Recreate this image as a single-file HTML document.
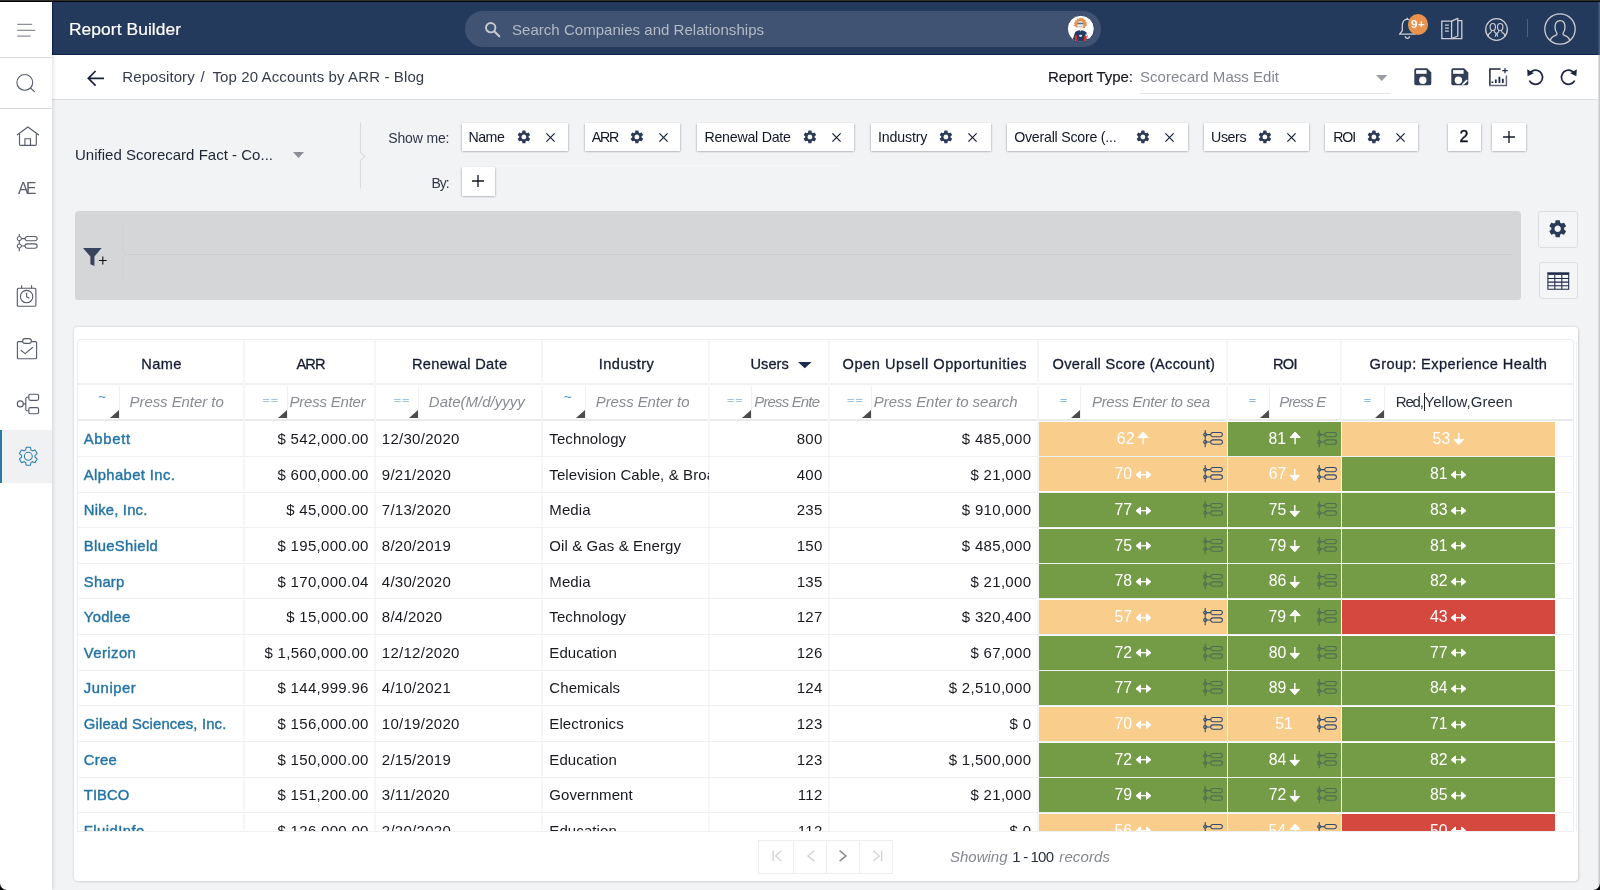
<!DOCTYPE html>
<html lang="en"><head><meta charset="utf-8"><title>Report Builder</title>
<style>

html,body{margin:0;padding:0}
body{will-change:transform;width:1600px;height:890px;overflow:hidden;position:relative;background:#f2f3f5;font-family:'Liberation Sans',sans-serif;}
.t{position:absolute;white-space:pre;line-height:20px;height:20px}
.a{position:absolute}
svg{position:absolute;overflow:visible}
.chip{position:absolute;background:#fff;top:122.5px;height:28.5px;box-shadow:0 1.3px 2.2px rgba(10,15,30,.4),0 0 1px rgba(20,30,50,.12);}
.hl{position:absolute;height:1px;background:#eef0f2}
.vl{position:absolute;width:1px;background:#f0f1f3}

</style></head>
<body>
<svg width="0" height="0" style="left:0;top:0"><defs>
<path id="gear" d="M19.14 12.94c.04-.3.06-.61.06-.94 0-.32-.02-.64-.07-.94l2.03-1.58c.18-.14.23-.41.12-.61l-1.92-3.32c-.12-.22-.37-.29-.59-.22l-2.39.96c-.5-.38-1.03-.7-1.62-.94l-.36-2.54c-.04-.24-.24-.41-.48-.41h-3.84c-.24 0-.43.17-.47.41l-.36 2.54c-.59.24-1.13.57-1.62.94l-2.39-.96c-.22-.08-.47 0-.59.22L2.74 8.87c-.12.21-.08.47.12.61l2.03 1.58c-.05.3-.09.63-.09.94s.02.64.07.94l-2.03 1.58c-.18.14-.23.41-.12.61l1.92 3.32c.12.22.37.29.59.22l2.39-.96c.5.38 1.03.7 1.62.94l.36 2.54c.05.24.24.41.48.41h3.84c.24 0 .44-.17.47-.41l.36-2.54c.59-.24 1.13-.56 1.62-.94l2.39.96c.22.08.47 0 .59-.22l1.92-3.32c.12-.22.07-.47-.12-.61l-2.01-1.58zM12 15.6c-1.98 0-3.6-1.62-3.6-3.6s1.62-3.6 3.6-3.6 3.6 1.62 3.6 3.6-1.62 3.6-3.6 3.6z"/>
<g id="tl" fill="none"><path d="M2.2 0V17.2"/><circle cx="2.2" cy="4.6" r="1.55"/><circle cx="2.2" cy="12" r="1.55"/><path d="M3.75 4.6H7.7M3.75 12H7.7"/><rect x="7.7" y="2.45" width="11.7" height="4.3" rx="2.15"/><rect x="7.7" y="9.85" width="11.7" height="4.3" rx="2.15"/></g>
<g id="up"><path d="M5.1 0L10.2 5.6H0Z"/><path d="M5.1 4V12.2" stroke-width="1.4" fill="none"/></g>
<g id="dn"><path d="M4.8 11.8L9.6 6.4H0Z"/><path d="M4.8 0V8" stroke-width="1.4" fill="none"/></g>
<g id="lr"><path d="M0 3.7L4.5 0V7.4Z"/><path d="M15 3.7L10.5 0V7.4Z"/><path d="M3.5 3.7H11.5" stroke-width="1.25" fill="none"/></g>
<path id="tri" d="M9 0V8H0Z"/>
</defs></svg>
<span class="t" style="left:75.00px;top:144.90px;font-size:15px;color:#1e2533;letter-spacing:0.015px;">Unified Scorecard Fact - Co...</span>
<svg style="left:293px;top:152.2px;" width="12" height="7" viewBox="0 0 12 7"><path d="M0 0H11L5.5 6Z" fill="#8c9096"/></svg>
<svg style="left:358px;top:122px;" width="10" height="68" viewBox="0 0 10 68"><path d="M2.5 .5V30.6L6.8 34.4L2.5 38.2V66.5" fill="none" stroke="#dadbde" stroke-width="1.1"/></svg>
<span class="t" style="left:388.30px;top:128.40px;font-size:14px;color:#2f3746;letter-spacing:-0.150px;">Show me:</span>
<span class="t" style="left:431.40px;top:173.40px;font-size:14px;color:#2f3746;letter-spacing:-1.017px;">By:</span>
<div class="chip" style="left:461.5px;width:106.5px"></div>
<span class="t" style="left:468.40px;top:126.70px;font-size:14.2px;color:#121826;letter-spacing:-0.453px;">Name</span>
<svg style="left:515.9px;top:128.8px;" width="15.8" height="15.8" viewBox="0 0 24 24"><use href="#gear" fill="#2b3a57"/></svg>
<svg style="left:545.6px;top:133.2px;" width="9" height="9" viewBox="0 0 9 9"><path d="M.4 .4L8.6 8.6M8.6 .4L.4 8.6" stroke="#19233c" stroke-width="1.25"/></svg>
<div class="chip" style="left:584.5px;width:95.79999999999995px"></div>
<span class="t" style="left:591.70px;top:126.70px;font-size:14.2px;color:#121826;letter-spacing:-1.200px;">ARR</span>
<svg style="left:628.5px;top:128.8px;" width="15.8" height="15.8" viewBox="0 0 24 24"><use href="#gear" fill="#2b3a57"/></svg>
<svg style="left:658.5px;top:133.2px;" width="9" height="9" viewBox="0 0 9 9"><path d="M.4 .4L8.6 8.6M8.6 .4L.4 8.6" stroke="#19233c" stroke-width="1.25"/></svg>
<div class="chip" style="left:697px;width:157px"></div>
<span class="t" style="left:704.40px;top:126.70px;font-size:14.2px;color:#121826;letter-spacing:-0.230px;">Renewal Date</span>
<svg style="left:801.8px;top:128.8px;" width="15.8" height="15.8" viewBox="0 0 24 24"><use href="#gear" fill="#2b3a57"/></svg>
<svg style="left:832.2px;top:133.2px;" width="9" height="9" viewBox="0 0 9 9"><path d="M.4 .4L8.6 8.6M8.6 .4L.4 8.6" stroke="#19233c" stroke-width="1.25"/></svg>
<div class="chip" style="left:870.5px;width:120.5px"></div>
<span class="t" style="left:878.10px;top:126.70px;font-size:14.2px;color:#121826;letter-spacing:-0.167px;">Industry</span>
<svg style="left:937.9px;top:128.8px;" width="15.8" height="15.8" viewBox="0 0 24 24"><use href="#gear" fill="#2b3a57"/></svg>
<svg style="left:968px;top:133.2px;" width="9" height="9" viewBox="0 0 9 9"><path d="M.4 .4L8.6 8.6M8.6 .4L.4 8.6" stroke="#19233c" stroke-width="1.25"/></svg>
<div class="chip" style="left:1007px;width:180.5999999999999px"></div>
<span class="t" style="left:1014.20px;top:126.70px;font-size:14.2px;color:#121826;letter-spacing:-0.238px;">Overall Score (...</span>
<svg style="left:1134.5px;top:128.8px;" width="15.8" height="15.8" viewBox="0 0 24 24"><use href="#gear" fill="#2b3a57"/></svg>
<svg style="left:1164.8px;top:133.2px;" width="9" height="9" viewBox="0 0 9 9"><path d="M.4 .4L8.6 8.6M8.6 .4L.4 8.6" stroke="#19233c" stroke-width="1.25"/></svg>
<div class="chip" style="left:1204px;width:105px"></div>
<span class="t" style="left:1211.10px;top:126.70px;font-size:14.2px;color:#121826;letter-spacing:-0.416px;">Users</span>
<svg style="left:1256.5px;top:128.8px;" width="15.8" height="15.8" viewBox="0 0 24 24"><use href="#gear" fill="#2b3a57"/></svg>
<svg style="left:1286.8px;top:133.2px;" width="9" height="9" viewBox="0 0 9 9"><path d="M.4 .4L8.6 8.6M8.6 .4L.4 8.6" stroke="#19233c" stroke-width="1.25"/></svg>
<div class="chip" style="left:1325.2px;width:92.79999999999995px"></div>
<span class="t" style="left:1333.30px;top:126.70px;font-size:14.2px;color:#121826;letter-spacing:-1.200px;">ROI</span>
<svg style="left:1365.9px;top:128.8px;" width="15.8" height="15.8" viewBox="0 0 24 24"><use href="#gear" fill="#2b3a57"/></svg>
<svg style="left:1396px;top:133.2px;" width="9" height="9" viewBox="0 0 9 9"><path d="M.4 .4L8.6 8.6M8.6 .4L.4 8.6" stroke="#19233c" stroke-width="1.25"/></svg>
<div class="chip" style="left:1447.5px;width:33.6px"></div>
<span class="t" style="left:1459.55px;top:126.60px;font-size:16px;color:#10151f;-webkit-text-stroke:0.45px #10151f;">2</span>
<div class="chip" style="left:1491.8px;width:34px"></div>
<svg style="left:1503px;top:130.8px;" width="12" height="12" viewBox="0 0 12 12"><path d="M6 0V12M0 6H12" stroke="#121826" stroke-width="1.35"/></svg>
<div class="chip" style="left:461.5px;width:33.4px;top:167.2px"></div>
<svg style="left:472px;top:175.2px;" width="12" height="12" viewBox="0 0 12 12"><path d="M6 0V12M0 6H12" stroke="#121826" stroke-width="1.35"/></svg>
<div class="a" style="left:461.5px;top:165.4px;width:378px;height:1px;background:#f6f7f8"></div>
<div class="a" style="left:75px;top:211px;width:1446px;height:89px;background:#d5d6d8;border-radius:3.5px"></div>
<svg style="left:83.4px;top:247.8px;" width="25" height="19" viewBox="0 0 25 19"><path d="M0 0H18.6L11.4 8.6V18L7.4 16.2V8.6Z" fill="#36445c"/><path d="M19.8 8.6V16.4M15.9 12.5H23.7" stroke="#111" stroke-width="1.1"/></svg>
<svg style="left:121px;top:220px;" width="10" height="68" viewBox="0 0 10 68"><path d="M1.7 0V31.2L5.4 34L1.7 36.8V66" fill="none" stroke="#cdced0" stroke-width="1" stroke-dasharray="1.2 1.2"/></svg>
<div class="a" style="left:129px;top:253.5px;width:1383.5px;height:1px;background:#cbccce"></div>
<div class="a" style="left:1538px;top:211.4px;width:39.6px;height:36.6px;border:1px solid #dcdde0;border-radius:3px;box-sizing:border-box;background:#f4f5f6"></div>
<svg style="left:1547.2px;top:218.4px;" width="21.4" height="21.4" viewBox="0 0 24 24"><use href="#gear" fill="#2b3a57"/></svg>
<div class="a" style="left:1539px;top:261.6px;width:38.6px;height:37.2px;border:1px solid #dcdde0;border-radius:3px;box-sizing:border-box;background:#f4f5f6"></div>
<svg style="left:1547px;top:271.5px;" width="23" height="18" viewBox="0 0 23 18"><rect x=".3" y=".3" width="22" height="2.6" fill="#1d2a4a"/><path d="M.9 2.9V17.3H21.7V2.9M.9 6.5H21.7M.9 10.1H21.7M.9 13.7H21.7M7.8 2.9V17.3M14.8 2.9V17.3" fill="none" stroke="#1d2a4a" stroke-width="1.05"/></svg>
<div class="a" style="left:74px;top:327px;width:1504px;height:554px;background:#fff;border-radius:4px;box-shadow:0 0 3px rgba(0,0,0,.16),1px 1px 3px rgba(0,0,0,.08)"></div>
<div class="a" style="left:77px;top:339px;width:1497px;height:492.5px;border:1px solid #ecedef;border-bottom:none;border-radius:4px 4px 0 0;box-sizing:border-box"></div>
<div class="a" style="left:78px;top:383px;width:1495.5px;height:2px;background:#eeeff0"></div>
<div class="a" style="left:78px;top:419px;width:1495.5px;height:1.6px;background:#e9eaeb"></div>
<div class="vl" style="left:243.4px;top:340px;height:491px;width:2px;background:#f5f6f8"></div>
<div class="vl" style="left:374.4px;top:340px;height:491px;width:2px;background:#f5f6f8"></div>
<div class="vl" style="left:541.4px;top:340px;height:491px;width:2px;background:#f5f6f8"></div>
<div class="vl" style="left:707.9px;top:340px;height:491px;width:2px;background:#f5f6f8"></div>
<div class="vl" style="left:827.9px;top:340px;height:491px;width:2px;background:#f5f6f8"></div>
<div class="vl" style="left:1037.2px;top:340px;height:491px;width:2px;background:#f5f6f8"></div>
<div class="vl" style="left:1226.0px;top:340px;height:491px;width:2px;background:#f5f6f8"></div>
<div class="vl" style="left:1340.4px;top:340px;height:491px;width:2px;background:#f5f6f8"></div>
<div class="vl" style="left:1575.5px;top:342px;height:489px;background:#f1f2f3"></div>
<span class="t" style="left:141.30px;top:354.20px;font-size:14.6px;color:#141d33;letter-spacing:0.354px;-webkit-text-stroke:0.3px #141d33;">Name</span>
<span class="t" style="left:296.50px;top:354.20px;font-size:14.6px;color:#141d33;letter-spacing:-0.906px;-webkit-text-stroke:0.3px #141d33;">ARR</span>
<span class="t" style="left:412.00px;top:354.20px;font-size:14.6px;color:#141d33;letter-spacing:0.303px;-webkit-text-stroke:0.3px #141d33;">Renewal Date</span>
<span class="t" style="left:598.80px;top:354.20px;font-size:14.6px;color:#141d33;letter-spacing:0.440px;-webkit-text-stroke:0.3px #141d33;">Industry</span>
<span class="t" style="left:750.50px;top:354.20px;font-size:14.6px;color:#141d33;letter-spacing:0.048px;-webkit-text-stroke:0.3px #141d33;">Users</span>
<span class="t" style="left:842.50px;top:354.20px;font-size:14.6px;color:#141d33;letter-spacing:0.535px;-webkit-text-stroke:0.3px #141d33;">Open Upsell Opportunities</span>
<span class="t" style="left:1052.50px;top:354.20px;font-size:14.6px;color:#141d33;letter-spacing:0.344px;-webkit-text-stroke:0.3px #141d33;">Overall Score (Account)</span>
<span class="t" style="left:1273.00px;top:354.20px;font-size:14.6px;color:#141d33;letter-spacing:-0.727px;-webkit-text-stroke:0.3px #141d33;">ROI</span>
<span class="t" style="left:1369.50px;top:354.20px;font-size:14.6px;color:#141d33;letter-spacing:0.416px;-webkit-text-stroke:0.3px #141d33;">Group: Experience Health</span>
<svg style="left:798.2px;top:362px;" width="14" height="7" viewBox="0 0 14 7"><path d="M0 0H13.6L6.8 6.2Z" fill="#1d2a4a"/></svg>
<div class="vl" style="left:119.1px;top:386px;height:32px;background:#eff0f1"></div>
<svg style="left:110.1px;top:410.3px;" width="9" height="8" viewBox="0 0 9 8"><use href="#tri" fill="#4c4c4e"/></svg>
<span class="t" style="left:98.30px;top:386.90px;font-size:13.6px;color:#3f8ac2;">~</span>
<span class="t" style="left:129.50px;top:392.00px;font-size:15px;color:#888b91;font-style:italic;letter-spacing:-0.061px;">Press Enter to</span>
<div class="vl" style="left:286.6px;top:386px;height:32px;background:#eff0f1"></div>
<svg style="left:277.6px;top:410.3px;" width="9" height="8" viewBox="0 0 9 8"><use href="#tri" fill="#4c4c4e"/></svg>
<span class="t" style="left:262.50px;top:390.50px;font-size:12.5px;color:#9dc3e3;font-weight:700;letter-spacing:0.891px;transform:scaleY(.66);">==</span>
<span class="t" style="left:289.50px;top:392.00px;font-size:15px;color:#888b91;font-style:italic;letter-spacing:-0.212px;">Press Enter</span>
<div class="vl" style="left:417.6px;top:386px;height:32px;background:#eff0f1"></div>
<svg style="left:408.6px;top:410.3px;" width="9" height="8" viewBox="0 0 9 8"><use href="#tri" fill="#4c4c4e"/></svg>
<span class="t" style="left:393.80px;top:390.50px;font-size:12.5px;color:#9dc3e3;font-weight:700;letter-spacing:0.891px;transform:scaleY(.66);">==</span>
<span class="t" style="left:428.80px;top:392.00px;font-size:15px;color:#888b91;font-style:italic;letter-spacing:0.012px;">Date(M/d/yyyy</span>
<div class="vl" style="left:584.6px;top:386px;height:32px;background:#eff0f1"></div>
<svg style="left:575.6px;top:410.3px;" width="9" height="8" viewBox="0 0 9 8"><use href="#tri" fill="#4c4c4e"/></svg>
<span class="t" style="left:563.80px;top:386.90px;font-size:13.6px;color:#3f8ac2;">~</span>
<span class="t" style="left:595.80px;top:392.00px;font-size:15px;color:#888b91;font-style:italic;letter-spacing:-0.104px;">Press Enter to</span>
<div class="vl" style="left:751.1px;top:386px;height:32px;background:#eff0f1"></div>
<svg style="left:742.1px;top:410.3px;" width="9" height="8" viewBox="0 0 9 8"><use href="#tri" fill="#4c4c4e"/></svg>
<span class="t" style="left:727.00px;top:390.50px;font-size:12.5px;color:#9dc3e3;font-weight:700;letter-spacing:0.891px;transform:scaleY(.66);">==</span>
<span class="t" style="left:754.30px;top:392.00px;font-size:15px;color:#888b91;font-style:italic;letter-spacing:-0.853px;">Press Ente</span>
<div class="vl" style="left:871.1px;top:386px;height:32px;background:#eff0f1"></div>
<svg style="left:862.1px;top:410.3px;" width="9" height="8" viewBox="0 0 9 8"><use href="#tri" fill="#4c4c4e"/></svg>
<span class="t" style="left:847.00px;top:390.50px;font-size:12.5px;color:#9dc3e3;font-weight:700;letter-spacing:1.200px;transform:scaleY(.66);">==</span>
<span class="t" style="left:873.80px;top:392.00px;font-size:15px;color:#888b91;font-style:italic;letter-spacing:-0.027px;">Press Enter to search</span>
<div class="vl" style="left:1080.4px;top:386px;height:32px;background:#eff0f1"></div>
<svg style="left:1071.4px;top:410.3px;" width="9" height="8" viewBox="0 0 9 8"><use href="#tri" fill="#4c4c4e"/></svg>
<span class="t" style="left:1060.00px;top:390.50px;font-size:12.5px;color:#8ebbe0;font-weight:700;transform:scaleY(.66);">=</span>
<span class="t" style="left:1092.00px;top:392.00px;font-size:15px;color:#888b91;font-style:italic;letter-spacing:-0.318px;">Press Enter to sea</span>
<div class="vl" style="left:1269.2px;top:386px;height:32px;background:#eff0f1"></div>
<svg style="left:1260.2px;top:410.3px;" width="9" height="8" viewBox="0 0 9 8"><use href="#tri" fill="#4c4c4e"/></svg>
<span class="t" style="left:1248.80px;top:390.50px;font-size:12.5px;color:#8ebbe0;font-weight:700;transform:scaleY(.66);">=</span>
<span class="t" style="left:1279.30px;top:392.00px;font-size:15px;color:#888b91;font-style:italic;letter-spacing:-0.919px;">Press E</span>
<div class="vl" style="left:1383.6px;top:386px;height:32px;background:#eff0f1"></div>
<svg style="left:1374.6px;top:410.3px;" width="9" height="8" viewBox="0 0 9 8"><use href="#tri" fill="#4c4c4e"/></svg>
<span class="t" style="left:1363.80px;top:390.50px;font-size:12.5px;color:#8ebbe0;font-weight:700;transform:scaleY(.66);">=</span>
<span class="t" style="left:1395.80px;top:392.00px;font-size:15px;color:#262d3b;letter-spacing:-1.200px;">Red,</span>
<span class="t" style="left:1424.60px;top:392.00px;font-size:15px;color:#262d3b;letter-spacing:0.005px;">Yellow,Green</span>
<div class="a" style="left:1424.2px;top:392.5px;width:1px;height:18.5px;background:#222"></div>
<div class="a" style="left:78px;top:420px;width:1496px;height:411.2px;overflow:hidden"><div class="a" style="left:-78px;top:-420px;width:1600px;height:890px">
<span class="t" style="left:83.80px;top:428.92px;font-size:14.8px;color:#2474a5;letter-spacing:0.694px;-webkit-text-stroke:0.4px #2474a5;">Abbett</span>
<span class="t" style="left:277.51px;top:428.92px;font-size:15px;color:#17191e;letter-spacing:0.300px;">$ 542,000.00</span>
<span class="t" style="left:381.80px;top:428.92px;font-size:15px;color:#17191e;letter-spacing:0.280px;">12/30/2020</span>
<span class="t" style="left:549.30px;top:428.92px;font-size:15px;color:#17191e;letter-spacing:0.100px;">Technology</span>
<span class="t" style="left:796.67px;top:428.92px;font-size:15px;color:#17191e;letter-spacing:0.300px;">800</span>
<span class="t" style="left:961.87px;top:428.92px;font-size:15px;color:#17191e;letter-spacing:0.300px;">$ 485,000</span>
<div class="a" style="left:1039.3px;top:421.70px;width:187.9px;height:34.05px;background:#f9cd8c"></div>
<span class="t" style="left:1116.85px;top:428.72px;font-size:15.8px;color:#fff;letter-spacing:0.022px;">62</span>
<svg style="left:1138.05px;top:432.02px;" width="11" height="13" viewBox="0 0 11 13"><use href="#up" fill="#fff" stroke="#fff"/></svg>
<svg style="left:1203.3px;top:429.8px;" width="21" height="18" viewBox="0 0 21 18"><use href="#tl" stroke="#2f4a6e" stroke-width="1.05"/></svg>
<div class="a" style="left:1228.3px;top:421.70px;width:113.0px;height:34.05px;background:#749b46"></div>
<span class="t" style="left:1268.40px;top:428.72px;font-size:15.8px;color:#fff;letter-spacing:0.022px;">81</span>
<svg style="left:1289.6px;top:432.02px;" width="11" height="13" viewBox="0 0 11 13"><use href="#up" fill="#fff" stroke="#fff"/></svg>
<svg style="left:1317.4px;top:429.8px;" width="21" height="18" viewBox="0 0 21 18"><use href="#tl" stroke="#4d6f52" stroke-width="1.05"/></svg>
<div class="a" style="left:1342.1px;top:421.70px;width:213.2px;height:34.05px;background:#f9cd8c"></div>
<span class="t" style="left:1432.60px;top:428.72px;font-size:15.8px;color:#fff;letter-spacing:0.022px;">53</span>
<svg style="left:1453.8px;top:433.32px;" width="10" height="12" viewBox="0 0 10 12"><use href="#dn" fill="#fff" stroke="#fff"/></svg>
<div class="hl" style="left:78px;top:455.85px;width:1495.5px"></div>
<span class="t" style="left:83.80px;top:464.57px;font-size:14.8px;color:#2474a5;letter-spacing:0.384px;-webkit-text-stroke:0.4px #2474a5;">Alphabet Inc.</span>
<span class="t" style="left:277.51px;top:464.57px;font-size:15px;color:#17191e;letter-spacing:0.300px;">$ 600,000.00</span>
<span class="t" style="left:381.80px;top:464.57px;font-size:15px;color:#17191e;letter-spacing:0.280px;">9/21/2020</span>
<div class="a" style="left:543.5px;top:457.05px;width:165.5px;height:34px;overflow:hidden"><div class="a" style="left:-543.5px;top:-457.05px;">
<span class="t" style="left:549.30px;top:464.57px;font-size:15px;color:#17191e;letter-spacing:0.100px;">Television Cable, &amp; Broadcasting</span>
</div></div>
<span class="t" style="left:796.67px;top:464.57px;font-size:15px;color:#17191e;letter-spacing:0.300px;">400</span>
<span class="t" style="left:970.51px;top:464.57px;font-size:15px;color:#17191e;letter-spacing:0.300px;">$ 21,000</span>
<div class="a" style="left:1039.3px;top:457.35px;width:187.9px;height:34.05px;background:#f9cd8c"></div>
<span class="t" style="left:1114.45px;top:464.37px;font-size:15.8px;color:#fff;letter-spacing:0.022px;">70</span>
<svg style="left:1135.65px;top:470.97px;" width="15" height="7.4" viewBox="0 0 15 7.4"><use href="#lr" fill="#fff" stroke="#fff"/></svg>
<svg style="left:1203.3px;top:465.45px;" width="21" height="18" viewBox="0 0 21 18"><use href="#tl" stroke="#2f4a6e" stroke-width="1.05"/></svg>
<div class="a" style="left:1228.3px;top:457.35px;width:113.0px;height:34.05px;background:#f9cd8c"></div>
<span class="t" style="left:1268.70px;top:464.37px;font-size:15.8px;color:#fff;letter-spacing:0.022px;">67</span>
<svg style="left:1289.9px;top:468.97px;" width="10" height="12" viewBox="0 0 10 12"><use href="#dn" fill="#fff" stroke="#fff"/></svg>
<svg style="left:1317.4px;top:465.45px;" width="21" height="18" viewBox="0 0 21 18"><use href="#tl" stroke="#2f4a6e" stroke-width="1.05"/></svg>
<div class="a" style="left:1342.1px;top:457.35px;width:213.2px;height:34.05px;background:#749b46"></div>
<span class="t" style="left:1429.90px;top:464.37px;font-size:15.8px;color:#fff;letter-spacing:0.022px;">81</span>
<svg style="left:1451.1px;top:470.97px;" width="15" height="7.4" viewBox="0 0 15 7.4"><use href="#lr" fill="#fff" stroke="#fff"/></svg>
<div class="hl" style="left:78px;top:491.50px;width:1495.5px"></div>
<span class="t" style="left:83.80px;top:500.22px;font-size:14.8px;color:#2474a5;letter-spacing:0.201px;-webkit-text-stroke:0.4px #2474a5;">Nike, Inc.</span>
<span class="t" style="left:286.15px;top:500.22px;font-size:15px;color:#17191e;letter-spacing:0.300px;">$ 45,000.00</span>
<span class="t" style="left:381.80px;top:500.22px;font-size:15px;color:#17191e;letter-spacing:0.280px;">7/13/2020</span>
<span class="t" style="left:549.30px;top:500.22px;font-size:15px;color:#17191e;letter-spacing:0.100px;">Media</span>
<span class="t" style="left:796.67px;top:500.22px;font-size:15px;color:#17191e;letter-spacing:0.300px;">235</span>
<span class="t" style="left:961.87px;top:500.22px;font-size:15px;color:#17191e;letter-spacing:0.300px;">$ 910,000</span>
<div class="a" style="left:1039.3px;top:493.00px;width:187.9px;height:34.05px;background:#749b46"></div>
<span class="t" style="left:1114.45px;top:500.02px;font-size:15.8px;color:#fff;letter-spacing:0.022px;">77</span>
<svg style="left:1135.65px;top:506.62px;" width="15" height="7.4" viewBox="0 0 15 7.4"><use href="#lr" fill="#fff" stroke="#fff"/></svg>
<svg style="left:1203.3px;top:501.1px;" width="21" height="18" viewBox="0 0 21 18"><use href="#tl" stroke="#4d6f52" stroke-width="1.05"/></svg>
<div class="a" style="left:1228.3px;top:493.00px;width:113.0px;height:34.05px;background:#749b46"></div>
<span class="t" style="left:1268.70px;top:500.02px;font-size:15.8px;color:#fff;letter-spacing:0.022px;">75</span>
<svg style="left:1289.9px;top:504.62px;" width="10" height="12" viewBox="0 0 10 12"><use href="#dn" fill="#fff" stroke="#fff"/></svg>
<svg style="left:1317.4px;top:501.1px;" width="21" height="18" viewBox="0 0 21 18"><use href="#tl" stroke="#4d6f52" stroke-width="1.05"/></svg>
<div class="a" style="left:1342.1px;top:493.00px;width:213.2px;height:34.05px;background:#749b46"></div>
<span class="t" style="left:1429.90px;top:500.02px;font-size:15.8px;color:#fff;letter-spacing:0.022px;">83</span>
<svg style="left:1451.1px;top:506.62px;" width="15" height="7.4" viewBox="0 0 15 7.4"><use href="#lr" fill="#fff" stroke="#fff"/></svg>
<div class="hl" style="left:78px;top:527.15px;width:1495.5px"></div>
<span class="t" style="left:83.80px;top:535.88px;font-size:14.8px;color:#2474a5;letter-spacing:0.361px;-webkit-text-stroke:0.4px #2474a5;">BlueShield</span>
<span class="t" style="left:277.51px;top:535.88px;font-size:15px;color:#17191e;letter-spacing:0.300px;">$ 195,000.00</span>
<span class="t" style="left:381.80px;top:535.88px;font-size:15px;color:#17191e;letter-spacing:0.280px;">8/20/2019</span>
<span class="t" style="left:549.30px;top:535.88px;font-size:15px;color:#17191e;letter-spacing:0.100px;">Oil &amp; Gas &amp; Energy</span>
<span class="t" style="left:796.67px;top:535.88px;font-size:15px;color:#17191e;letter-spacing:0.300px;">150</span>
<span class="t" style="left:961.87px;top:535.88px;font-size:15px;color:#17191e;letter-spacing:0.300px;">$ 485,000</span>
<div class="a" style="left:1039.3px;top:528.65px;width:187.9px;height:34.05px;background:#749b46"></div>
<span class="t" style="left:1114.45px;top:535.67px;font-size:15.8px;color:#fff;letter-spacing:0.022px;">75</span>
<svg style="left:1135.65px;top:542.27px;" width="15" height="7.4" viewBox="0 0 15 7.4"><use href="#lr" fill="#fff" stroke="#fff"/></svg>
<svg style="left:1203.3px;top:536.75px;" width="21" height="18" viewBox="0 0 21 18"><use href="#tl" stroke="#4d6f52" stroke-width="1.05"/></svg>
<div class="a" style="left:1228.3px;top:528.65px;width:113.0px;height:34.05px;background:#749b46"></div>
<span class="t" style="left:1268.70px;top:535.67px;font-size:15.8px;color:#fff;letter-spacing:0.022px;">79</span>
<svg style="left:1289.9px;top:540.27px;" width="10" height="12" viewBox="0 0 10 12"><use href="#dn" fill="#fff" stroke="#fff"/></svg>
<svg style="left:1317.4px;top:536.75px;" width="21" height="18" viewBox="0 0 21 18"><use href="#tl" stroke="#4d6f52" stroke-width="1.05"/></svg>
<div class="a" style="left:1342.1px;top:528.65px;width:213.2px;height:34.05px;background:#749b46"></div>
<span class="t" style="left:1429.90px;top:535.67px;font-size:15.8px;color:#fff;letter-spacing:0.022px;">81</span>
<svg style="left:1451.1px;top:542.27px;" width="15" height="7.4" viewBox="0 0 15 7.4"><use href="#lr" fill="#fff" stroke="#fff"/></svg>
<div class="hl" style="left:78px;top:562.80px;width:1495.5px"></div>
<span class="t" style="left:83.80px;top:571.53px;font-size:14.8px;color:#2474a5;letter-spacing:0.250px;-webkit-text-stroke:0.4px #2474a5;">Sharp</span>
<span class="t" style="left:277.51px;top:571.53px;font-size:15px;color:#17191e;letter-spacing:0.300px;">$ 170,000.04</span>
<span class="t" style="left:381.80px;top:571.53px;font-size:15px;color:#17191e;letter-spacing:0.280px;">4/30/2020</span>
<span class="t" style="left:549.30px;top:571.53px;font-size:15px;color:#17191e;letter-spacing:0.100px;">Media</span>
<span class="t" style="left:796.67px;top:571.53px;font-size:15px;color:#17191e;letter-spacing:0.300px;">135</span>
<span class="t" style="left:970.51px;top:571.53px;font-size:15px;color:#17191e;letter-spacing:0.300px;">$ 21,000</span>
<div class="a" style="left:1039.3px;top:564.30px;width:187.9px;height:34.05px;background:#749b46"></div>
<span class="t" style="left:1114.45px;top:571.33px;font-size:15.8px;color:#fff;letter-spacing:0.022px;">78</span>
<svg style="left:1135.65px;top:577.93px;" width="15" height="7.4" viewBox="0 0 15 7.4"><use href="#lr" fill="#fff" stroke="#fff"/></svg>
<svg style="left:1203.3px;top:572.4px;" width="21" height="18" viewBox="0 0 21 18"><use href="#tl" stroke="#4d6f52" stroke-width="1.05"/></svg>
<div class="a" style="left:1228.3px;top:564.30px;width:113.0px;height:34.05px;background:#749b46"></div>
<span class="t" style="left:1268.70px;top:571.33px;font-size:15.8px;color:#fff;letter-spacing:0.022px;">86</span>
<svg style="left:1289.9px;top:575.93px;" width="10" height="12" viewBox="0 0 10 12"><use href="#dn" fill="#fff" stroke="#fff"/></svg>
<svg style="left:1317.4px;top:572.4px;" width="21" height="18" viewBox="0 0 21 18"><use href="#tl" stroke="#4d6f52" stroke-width="1.05"/></svg>
<div class="a" style="left:1342.1px;top:564.30px;width:213.2px;height:34.05px;background:#749b46"></div>
<span class="t" style="left:1429.90px;top:571.33px;font-size:15.8px;color:#fff;letter-spacing:0.022px;">82</span>
<svg style="left:1451.1px;top:577.93px;" width="15" height="7.4" viewBox="0 0 15 7.4"><use href="#lr" fill="#fff" stroke="#fff"/></svg>
<div class="hl" style="left:78px;top:598.45px;width:1495.5px"></div>
<span class="t" style="left:83.80px;top:607.18px;font-size:14.8px;color:#2474a5;letter-spacing:0.356px;-webkit-text-stroke:0.4px #2474a5;">Yodlee</span>
<span class="t" style="left:286.15px;top:607.18px;font-size:15px;color:#17191e;letter-spacing:0.300px;">$ 15,000.00</span>
<span class="t" style="left:381.80px;top:607.18px;font-size:15px;color:#17191e;letter-spacing:0.280px;">8/4/2020</span>
<span class="t" style="left:549.30px;top:607.18px;font-size:15px;color:#17191e;letter-spacing:0.100px;">Technology</span>
<span class="t" style="left:796.67px;top:607.18px;font-size:15px;color:#17191e;letter-spacing:0.300px;">127</span>
<span class="t" style="left:961.87px;top:607.18px;font-size:15px;color:#17191e;letter-spacing:0.300px;">$ 320,400</span>
<div class="a" style="left:1039.3px;top:599.95px;width:187.9px;height:34.05px;background:#f9cd8c"></div>
<span class="t" style="left:1114.45px;top:606.98px;font-size:15.8px;color:#fff;letter-spacing:0.022px;">57</span>
<svg style="left:1135.65px;top:613.58px;" width="15" height="7.4" viewBox="0 0 15 7.4"><use href="#lr" fill="#fff" stroke="#fff"/></svg>
<svg style="left:1203.3px;top:608.05px;" width="21" height="18" viewBox="0 0 21 18"><use href="#tl" stroke="#2f4a6e" stroke-width="1.05"/></svg>
<div class="a" style="left:1228.3px;top:599.95px;width:113.0px;height:34.05px;background:#749b46"></div>
<span class="t" style="left:1268.40px;top:606.98px;font-size:15.8px;color:#fff;letter-spacing:0.022px;">79</span>
<svg style="left:1289.6px;top:610.28px;" width="11" height="13" viewBox="0 0 11 13"><use href="#up" fill="#fff" stroke="#fff"/></svg>
<svg style="left:1317.4px;top:608.05px;" width="21" height="18" viewBox="0 0 21 18"><use href="#tl" stroke="#4d6f52" stroke-width="1.05"/></svg>
<div class="a" style="left:1342.1px;top:599.95px;width:213.2px;height:34.05px;background:#d4483f"></div>
<span class="t" style="left:1429.90px;top:606.98px;font-size:15.8px;color:#fff;letter-spacing:0.022px;">43</span>
<svg style="left:1451.1px;top:613.58px;" width="15" height="7.4" viewBox="0 0 15 7.4"><use href="#lr" fill="#fff" stroke="#fff"/></svg>
<div class="hl" style="left:78px;top:634.10px;width:1495.5px"></div>
<span class="t" style="left:83.80px;top:642.83px;font-size:14.8px;color:#2474a5;letter-spacing:0.440px;-webkit-text-stroke:0.4px #2474a5;">Verizon</span>
<span class="t" style="left:264.41px;top:642.83px;font-size:15px;color:#17191e;letter-spacing:0.300px;">$ 1,560,000.00</span>
<span class="t" style="left:381.80px;top:642.83px;font-size:15px;color:#17191e;letter-spacing:0.280px;">12/12/2020</span>
<span class="t" style="left:549.30px;top:642.83px;font-size:15px;color:#17191e;letter-spacing:0.100px;">Education</span>
<span class="t" style="left:796.67px;top:642.83px;font-size:15px;color:#17191e;letter-spacing:0.300px;">126</span>
<span class="t" style="left:970.51px;top:642.83px;font-size:15px;color:#17191e;letter-spacing:0.300px;">$ 67,000</span>
<div class="a" style="left:1039.3px;top:635.60px;width:187.9px;height:34.05px;background:#749b46"></div>
<span class="t" style="left:1114.45px;top:642.62px;font-size:15.8px;color:#fff;letter-spacing:0.022px;">72</span>
<svg style="left:1135.65px;top:649.23px;" width="15" height="7.4" viewBox="0 0 15 7.4"><use href="#lr" fill="#fff" stroke="#fff"/></svg>
<svg style="left:1203.3px;top:643.7px;" width="21" height="18" viewBox="0 0 21 18"><use href="#tl" stroke="#4d6f52" stroke-width="1.05"/></svg>
<div class="a" style="left:1228.3px;top:635.60px;width:113.0px;height:34.05px;background:#749b46"></div>
<span class="t" style="left:1268.70px;top:642.62px;font-size:15.8px;color:#fff;letter-spacing:0.022px;">80</span>
<svg style="left:1289.9px;top:647.23px;" width="10" height="12" viewBox="0 0 10 12"><use href="#dn" fill="#fff" stroke="#fff"/></svg>
<svg style="left:1317.4px;top:643.7px;" width="21" height="18" viewBox="0 0 21 18"><use href="#tl" stroke="#4d6f52" stroke-width="1.05"/></svg>
<div class="a" style="left:1342.1px;top:635.60px;width:213.2px;height:34.05px;background:#749b46"></div>
<span class="t" style="left:1429.90px;top:642.62px;font-size:15.8px;color:#fff;letter-spacing:0.022px;">77</span>
<svg style="left:1451.1px;top:649.23px;" width="15" height="7.4" viewBox="0 0 15 7.4"><use href="#lr" fill="#fff" stroke="#fff"/></svg>
<div class="hl" style="left:78px;top:669.75px;width:1495.5px"></div>
<span class="t" style="left:83.80px;top:678.48px;font-size:14.8px;color:#2474a5;letter-spacing:0.578px;-webkit-text-stroke:0.4px #2474a5;">Juniper</span>
<span class="t" style="left:277.51px;top:678.48px;font-size:15px;color:#17191e;letter-spacing:0.300px;">$ 144,999.96</span>
<span class="t" style="left:381.80px;top:678.48px;font-size:15px;color:#17191e;letter-spacing:0.280px;">4/10/2021</span>
<span class="t" style="left:549.30px;top:678.48px;font-size:15px;color:#17191e;letter-spacing:0.100px;">Chemicals</span>
<span class="t" style="left:796.67px;top:678.48px;font-size:15px;color:#17191e;letter-spacing:0.300px;">124</span>
<span class="t" style="left:948.75px;top:678.48px;font-size:15px;color:#17191e;letter-spacing:0.300px;">$ 2,510,000</span>
<div class="a" style="left:1039.3px;top:671.25px;width:187.9px;height:34.05px;background:#749b46"></div>
<span class="t" style="left:1114.45px;top:678.27px;font-size:15.8px;color:#fff;letter-spacing:0.022px;">77</span>
<svg style="left:1135.65px;top:684.88px;" width="15" height="7.4" viewBox="0 0 15 7.4"><use href="#lr" fill="#fff" stroke="#fff"/></svg>
<svg style="left:1203.3px;top:679.35px;" width="21" height="18" viewBox="0 0 21 18"><use href="#tl" stroke="#4d6f52" stroke-width="1.05"/></svg>
<div class="a" style="left:1228.3px;top:671.25px;width:113.0px;height:34.05px;background:#749b46"></div>
<span class="t" style="left:1268.70px;top:678.27px;font-size:15.8px;color:#fff;letter-spacing:0.022px;">89</span>
<svg style="left:1289.9px;top:682.88px;" width="10" height="12" viewBox="0 0 10 12"><use href="#dn" fill="#fff" stroke="#fff"/></svg>
<svg style="left:1317.4px;top:679.35px;" width="21" height="18" viewBox="0 0 21 18"><use href="#tl" stroke="#4d6f52" stroke-width="1.05"/></svg>
<div class="a" style="left:1342.1px;top:671.25px;width:213.2px;height:34.05px;background:#749b46"></div>
<span class="t" style="left:1429.90px;top:678.27px;font-size:15.8px;color:#fff;letter-spacing:0.022px;">84</span>
<svg style="left:1451.1px;top:684.88px;" width="15" height="7.4" viewBox="0 0 15 7.4"><use href="#lr" fill="#fff" stroke="#fff"/></svg>
<div class="hl" style="left:78px;top:705.40px;width:1495.5px"></div>
<span class="t" style="left:83.80px;top:714.12px;font-size:14.8px;color:#2474a5;letter-spacing:0.175px;-webkit-text-stroke:0.4px #2474a5;">Gilead Sciences, Inc.</span>
<span class="t" style="left:277.51px;top:714.12px;font-size:15px;color:#17191e;letter-spacing:0.300px;">$ 156,000.00</span>
<span class="t" style="left:381.80px;top:714.12px;font-size:15px;color:#17191e;letter-spacing:0.280px;">10/19/2020</span>
<span class="t" style="left:549.30px;top:714.12px;font-size:15px;color:#17191e;letter-spacing:0.100px;">Electronics</span>
<span class="t" style="left:796.67px;top:714.12px;font-size:15px;color:#17191e;letter-spacing:0.300px;">123</span>
<span class="t" style="left:1009.54px;top:714.12px;font-size:15px;color:#17191e;letter-spacing:0.300px;">$ 0</span>
<div class="a" style="left:1039.3px;top:706.90px;width:187.9px;height:34.05px;background:#f9cd8c"></div>
<span class="t" style="left:1114.45px;top:713.92px;font-size:15.8px;color:#fff;letter-spacing:0.022px;">70</span>
<svg style="left:1135.65px;top:720.52px;" width="15" height="7.4" viewBox="0 0 15 7.4"><use href="#lr" fill="#fff" stroke="#fff"/></svg>
<svg style="left:1203.3px;top:715.0px;" width="21" height="18" viewBox="0 0 21 18"><use href="#tl" stroke="#2f4a6e" stroke-width="1.05"/></svg>
<div class="a" style="left:1228.3px;top:706.90px;width:113.0px;height:34.05px;background:#f9cd8c"></div>
<span class="t" style="left:1275.30px;top:713.92px;font-size:15.8px;color:#fff;letter-spacing:0.022px;">51</span>
<svg style="left:1317.4px;top:715.0px;" width="21" height="18" viewBox="0 0 21 18"><use href="#tl" stroke="#2f4a6e" stroke-width="1.05"/></svg>
<div class="a" style="left:1342.1px;top:706.90px;width:213.2px;height:34.05px;background:#749b46"></div>
<span class="t" style="left:1429.90px;top:713.92px;font-size:15.8px;color:#fff;letter-spacing:0.022px;">71</span>
<svg style="left:1451.1px;top:720.52px;" width="15" height="7.4" viewBox="0 0 15 7.4"><use href="#lr" fill="#fff" stroke="#fff"/></svg>
<div class="hl" style="left:78px;top:741.05px;width:1495.5px"></div>
<span class="t" style="left:83.80px;top:749.78px;font-size:14.8px;color:#2474a5;letter-spacing:0.307px;-webkit-text-stroke:0.4px #2474a5;">Cree</span>
<span class="t" style="left:277.51px;top:749.78px;font-size:15px;color:#17191e;letter-spacing:0.300px;">$ 150,000.00</span>
<span class="t" style="left:381.80px;top:749.78px;font-size:15px;color:#17191e;letter-spacing:0.280px;">2/15/2019</span>
<span class="t" style="left:549.30px;top:749.78px;font-size:15px;color:#17191e;letter-spacing:0.100px;">Education</span>
<span class="t" style="left:796.67px;top:749.78px;font-size:15px;color:#17191e;letter-spacing:0.300px;">123</span>
<span class="t" style="left:948.75px;top:749.78px;font-size:15px;color:#17191e;letter-spacing:0.300px;">$ 1,500,000</span>
<div class="a" style="left:1039.3px;top:742.55px;width:187.9px;height:34.05px;background:#749b46"></div>
<span class="t" style="left:1114.45px;top:749.58px;font-size:15.8px;color:#fff;letter-spacing:0.022px;">72</span>
<svg style="left:1135.65px;top:756.18px;" width="15" height="7.4" viewBox="0 0 15 7.4"><use href="#lr" fill="#fff" stroke="#fff"/></svg>
<svg style="left:1203.3px;top:750.65px;" width="21" height="18" viewBox="0 0 21 18"><use href="#tl" stroke="#4d6f52" stroke-width="1.05"/></svg>
<div class="a" style="left:1228.3px;top:742.55px;width:113.0px;height:34.05px;background:#749b46"></div>
<span class="t" style="left:1268.70px;top:749.58px;font-size:15.8px;color:#fff;letter-spacing:0.022px;">84</span>
<svg style="left:1289.9px;top:754.18px;" width="10" height="12" viewBox="0 0 10 12"><use href="#dn" fill="#fff" stroke="#fff"/></svg>
<svg style="left:1317.4px;top:750.65px;" width="21" height="18" viewBox="0 0 21 18"><use href="#tl" stroke="#4d6f52" stroke-width="1.05"/></svg>
<div class="a" style="left:1342.1px;top:742.55px;width:213.2px;height:34.05px;background:#749b46"></div>
<span class="t" style="left:1429.90px;top:749.58px;font-size:15.8px;color:#fff;letter-spacing:0.022px;">82</span>
<svg style="left:1451.1px;top:756.18px;" width="15" height="7.4" viewBox="0 0 15 7.4"><use href="#lr" fill="#fff" stroke="#fff"/></svg>
<div class="hl" style="left:78px;top:776.70px;width:1495.5px"></div>
<span class="t" style="left:83.80px;top:785.43px;font-size:14.8px;color:#2474a5;letter-spacing:0.070px;-webkit-text-stroke:0.4px #2474a5;">TIBCO</span>
<span class="t" style="left:277.51px;top:785.43px;font-size:15px;color:#17191e;letter-spacing:0.300px;">$ 151,200.00</span>
<span class="t" style="left:381.80px;top:785.43px;font-size:15px;color:#17191e;letter-spacing:0.280px;">3/11/2020</span>
<span class="t" style="left:549.30px;top:785.43px;font-size:15px;color:#17191e;letter-spacing:0.100px;">Government</span>
<span class="t" style="left:797.78px;top:785.43px;font-size:15px;color:#17191e;letter-spacing:0.300px;">112</span>
<span class="t" style="left:970.51px;top:785.43px;font-size:15px;color:#17191e;letter-spacing:0.300px;">$ 21,000</span>
<div class="a" style="left:1039.3px;top:778.20px;width:187.9px;height:34.05px;background:#749b46"></div>
<span class="t" style="left:1114.45px;top:785.23px;font-size:15.8px;color:#fff;letter-spacing:0.022px;">79</span>
<svg style="left:1135.65px;top:791.83px;" width="15" height="7.4" viewBox="0 0 15 7.4"><use href="#lr" fill="#fff" stroke="#fff"/></svg>
<svg style="left:1203.3px;top:786.3px;" width="21" height="18" viewBox="0 0 21 18"><use href="#tl" stroke="#4d6f52" stroke-width="1.05"/></svg>
<div class="a" style="left:1228.3px;top:778.20px;width:113.0px;height:34.05px;background:#749b46"></div>
<span class="t" style="left:1268.70px;top:785.23px;font-size:15.8px;color:#fff;letter-spacing:0.022px;">72</span>
<svg style="left:1289.9px;top:789.83px;" width="10" height="12" viewBox="0 0 10 12"><use href="#dn" fill="#fff" stroke="#fff"/></svg>
<svg style="left:1317.4px;top:786.3px;" width="21" height="18" viewBox="0 0 21 18"><use href="#tl" stroke="#4d6f52" stroke-width="1.05"/></svg>
<div class="a" style="left:1342.1px;top:778.20px;width:213.2px;height:34.05px;background:#749b46"></div>
<span class="t" style="left:1429.90px;top:785.23px;font-size:15.8px;color:#fff;letter-spacing:0.022px;">85</span>
<svg style="left:1451.1px;top:791.83px;" width="15" height="7.4" viewBox="0 0 15 7.4"><use href="#lr" fill="#fff" stroke="#fff"/></svg>
<div class="hl" style="left:78px;top:812.35px;width:1495.5px"></div>
<span class="t" style="left:83.80px;top:821.08px;font-size:14.8px;color:#2474a5;letter-spacing:0.467px;-webkit-text-stroke:0.4px #2474a5;">FluidInfo</span>
<span class="t" style="left:277.51px;top:821.08px;font-size:15px;color:#17191e;letter-spacing:0.300px;">$ 126,000.00</span>
<span class="t" style="left:381.80px;top:821.08px;font-size:15px;color:#17191e;letter-spacing:0.280px;">2/20/2020</span>
<span class="t" style="left:549.30px;top:821.08px;font-size:15px;color:#17191e;letter-spacing:0.100px;">Education</span>
<span class="t" style="left:797.78px;top:821.08px;font-size:15px;color:#17191e;letter-spacing:0.300px;">112</span>
<span class="t" style="left:1009.54px;top:821.08px;font-size:15px;color:#17191e;letter-spacing:0.300px;">$ 0</span>
<div class="a" style="left:1039.3px;top:813.85px;width:187.9px;height:34.05px;background:#f9cd8c"></div>
<span class="t" style="left:1114.45px;top:820.88px;font-size:15.8px;color:#fff;letter-spacing:0.022px;">56</span>
<svg style="left:1135.65px;top:827.48px;" width="15" height="7.4" viewBox="0 0 15 7.4"><use href="#lr" fill="#fff" stroke="#fff"/></svg>
<svg style="left:1203.3px;top:821.95px;" width="21" height="18" viewBox="0 0 21 18"><use href="#tl" stroke="#2f4a6e" stroke-width="1.05"/></svg>
<div class="a" style="left:1228.3px;top:813.85px;width:113.0px;height:34.05px;background:#f9cd8c"></div>
<span class="t" style="left:1268.40px;top:820.88px;font-size:15.8px;color:#fff;letter-spacing:0.022px;">54</span>
<svg style="left:1289.6px;top:824.18px;" width="11" height="13" viewBox="0 0 11 13"><use href="#up" fill="#fff" stroke="#fff"/></svg>
<svg style="left:1317.4px;top:821.95px;" width="21" height="18" viewBox="0 0 21 18"><use href="#tl" stroke="#2f4a6e" stroke-width="1.05"/></svg>
<div class="a" style="left:1342.1px;top:813.85px;width:213.2px;height:34.05px;background:#d4483f"></div>
<span class="t" style="left:1429.90px;top:820.88px;font-size:15.8px;color:#fff;letter-spacing:0.022px;">50</span>
<svg style="left:1451.1px;top:827.48px;" width="15" height="7.4" viewBox="0 0 15 7.4"><use href="#lr" fill="#fff" stroke="#fff"/></svg>
</div></div>
<div class="a" style="left:78px;top:831px;width:1496px;height:1px;background:#efeff0"></div>
<div class="a" style="left:758px;top:840px;width:134.5px;height:33.5px;border:1px solid #ededee;box-sizing:border-box"></div>
<div class="vl" style="left:792.5px;top:841px;height:32px;background:#ededee"></div>
<div class="vl" style="left:825.7px;top:841px;height:32px;background:#ededee"></div>
<div class="vl" style="left:859px;top:841px;height:32px;background:#ededee"></div>
<svg style="left:772px;top:850px;" width="11" height="12" viewBox="0 0 11 12"><path d="M1.2 .5V11.3M9.4 .7L3.6 5.9L9.4 11.1" fill="none" stroke="#d3d4d6" stroke-width="1.4"/></svg>
<svg style="left:805.5px;top:850px;" width="10" height="12" viewBox="0 0 10 12"><path d="M8.2 .7L2 5.9L8.2 11.1" fill="none" stroke="#d3d4d6" stroke-width="1.4"/></svg>
<svg style="left:838px;top:850px;" width="10" height="12" viewBox="0 0 10 12"><path d="M1.6 .7L8 5.9L1.6 11.1" fill="none" stroke="#888a8e" stroke-width="1.5"/></svg>
<svg style="left:872px;top:850px;" width="11" height="12" viewBox="0 0 11 12"><path d="M9.6 .5V11.3M1.4 .7L7.2 5.9L1.4 11.1" fill="none" stroke="#d3d4d6" stroke-width="1.4"/></svg>
<span class="t" style="left:950.00px;top:847.20px;font-size:15px;color:#85888e;font-style:italic;letter-spacing:-0.008px;">Showing</span>
<span class="t" style="left:1012.30px;top:847.20px;font-size:15px;color:#272f3e;">1</span>
<span class="t" style="left:1023.20px;top:847.20px;font-size:15px;color:#272f3e;">-</span>
<span class="t" style="left:1030.40px;top:847.20px;font-size:15px;color:#272f3e;letter-spacing:-0.716px;">100</span>
<span class="t" style="left:1059.30px;top:847.20px;font-size:15px;color:#85888e;font-style:italic;letter-spacing:0.111px;">records</span>
<div class="a" style="left:0px;top:0px;width:1600px;height:2px;background:linear-gradient(#2f2f2e 50%,#050505 50%)"></div>
<div class="a" style="left:52px;top:2px;width:1548px;height:53px;background:#243a5d;box-sizing:border-box;border-bottom:1px solid #0b2350;border-left:1px solid #0b2350"></div>
<span class="t" style="left:69.00px;top:19.30px;font-size:17.4px;color:#ffffff;letter-spacing:0.064px;-webkit-text-stroke:0.2px #ffffff;">Report Builder</span>
<div class="a" style="left:465px;top:11px;width:636px;height:36px;background:#405373;border-radius:18px"></div>
<svg style="left:485px;top:21.5px;" width="16" height="16" viewBox="0 0 16 16"><circle cx="5.7" cy="5.7" r="4.7" fill="none" stroke="#c5cad3" stroke-width="1.9"/><path d="M9.2 9.2L14.3 14.3" stroke="#c5cad3" stroke-width="2.1" stroke-linecap="round"/></svg>
<span class="t" style="left:512.00px;top:19.50px;font-size:15px;color:#b3b9c5;letter-spacing:0.031px;">Search Companies and Relationships</span>
<svg style="left:1066.8px;top:15.1px;" width="27.6" height="27.6" viewBox="0 0 27.6 27.6"><defs><clipPath id="mc"><circle cx="13.8" cy="13.8" r="13"/></clipPath></defs>
<circle cx="13.8" cy="13.8" r="13.5" fill="#fff" stroke="#1f3357" stroke-width=".9"/>
<g clip-path="url(#mc)">
<path d="M9.4 12.6L8.2 11.2L6.4 10.6L7.8 9.2L6.6 8L8.4 7.2L8 5.6L9.8 5.2L10.2 3.6L12 3.8L13 2.4L14.4 3.6L16.2 3L16.8 4.6L18.6 4.8L18.4 6.6L20.2 7.6L19.2 9L20.4 10.4L18.6 11.2L17.6 13Z" fill="#e8924e"/>
<rect x="10.4" y="6.2" width="5.9" height="7" rx="2.6" fill="#e8edf1"/>
<path d="M10.3 8.4H16.4" stroke="#5b6a82" stroke-width="1.5"/>
<path d="M11.6 11.2Q13.4 12.4 15.2 11.2" stroke="#a8b1bd" stroke-width=".8" fill="none"/>
<path d="M12.7 13.2H14.3L14.2 16H12.8Z" fill="#f4dcc8"/>
<path d="M4.6 28L8 17.6C8.6 16 10.6 15.5 12.6 15.2L13.5 16.6L14.4 15.2C16.4 15.5 18.6 16 19.4 17.6L23 28Z" fill="#243b66"/>
<path d="M19.2 18.6L21.4 23.6L19.8 24.6L18.2 20Z" fill="#f0f2f5"/>
<path d="M7.6 20.8L9.6 20L11 26.6L8.6 27.4Z" fill="#e0301e"/><path d="M19.8 21L17.6 20.4L16.2 26.6L18.8 27.4Z" fill="#e0301e"/>
<ellipse cx="13.6" cy="20.8" rx="1.6" ry="1.1" fill="#cfe3f3"/>
</g></svg>
<svg style="left:1398px;top:17px;" width="20" height="24" viewBox="0 0 20 24"><path d="M9.2 2.2C5.6 2.6 4.3 5.6 4.3 9V13.6L1.6 17.2H17L14.3 13.6V9C14.3 5.6 12.9 2.6 9.2 2.2Z" fill="none" stroke="#cdced1" stroke-width="1.3" stroke-linejoin="round"/><path d="M7.3 19.3A2.1 2.1 0 0 0 11.5 19.3" fill="none" stroke="#cdced1" stroke-width="1.3"/><path d="M9.3 2.2V.8" stroke="#cdced1" stroke-width="1.3"/></svg>
<div class="a" style="left:1407.6px;top:14.4px;width:20.4px;height:20.4px;background:#e8924e;border-radius:50%"></div>
<span class="t" style="left:1411.10px;top:14.40px;font-size:11.5px;color:#fff;font-weight:700;letter-spacing:0.475px;">9+</span>
<svg style="left:1440px;top:17px;" width="24" height="24" viewBox="0 0 24 24"><path d="M1.8 4.2H11.6V21.6H1.8Z" fill="none" stroke="#cdced1" stroke-width="1.3"/><path d="M11.6 4.2L17.8 1.4V19L11.6 21.6" fill="none" stroke="#cdced1" stroke-width="1.3" stroke-linejoin="round"/><path d="M17.8 3.6H21.8V21.6H11.6" fill="none" stroke="#cdced1" stroke-width="1.3"/><path d="M5 8.2H8.8M5 11.2H8.8M5 14.2H8.8" stroke="#cdced1" stroke-width="1.2"/></svg>
<svg style="left:1485.2px;top:18px;" width="23" height="23" viewBox="0 0 23 23"><circle cx="11.5" cy="11.5" r="10.8" fill="none" stroke="#cdced1" stroke-width="1.3"/><g fill="none" stroke="#cdced1" stroke-width="1.15"><ellipse cx="7.8" cy="9" rx="2.7" ry="3.5"/><path d="M6.4 12.2V13.3C6.4 15 3.3 14.6 2.8 18.6M9.2 12.2V13.3C9.2 15 12.3 14.6 12.8 18.6"/><ellipse cx="15.2" cy="9" rx="2.7" ry="3.5"/><path d="M13.799999999999999 12.2V13.3C13.799999999999999 15 10.7 14.6 10.2 18.6M16.599999999999998 12.2V13.3C16.599999999999998 15 19.7 14.6 20.2 18.6"/></g></svg>
<div class="a" style="left:1526.5px;top:19px;width:1px;height:17.5px;background:#50607f"></div>
<svg style="left:1544px;top:13px;" width="32" height="32" viewBox="0 0 32 32"><circle cx="16" cy="16" r="15.2" fill="none" stroke="#cdced1" stroke-width="1.3"/>
<path d="M6.4 27.2C7 23.6 9.8 23.2 12.6 21.8C13.2 21.4 13.2 20.4 12.6 19.6C11.4 18.2 11 16.4 11 14C11 10.4 12.8 7.6 16 7.6C19.2 7.6 21 10.4 21 14C21 16.4 20.6 18.2 19.4 19.6C18.8 20.4 18.8 21.4 19.4 21.8C22.2 23.2 25 23.6 25.6 27.2" fill="none" stroke="#cdced1" stroke-width="1.3"/></svg>
<div class="a" style="left:52px;top:55px;width:1548px;height:44px;background:#fff;border-bottom:1px solid #dcdde0"></div>
<svg style="left:87px;top:69.5px;" width="18" height="17" viewBox="0 0 18 17"><path d="M17 8.3H1.6M8.6 1L1.3 8.3L8.6 15.6" fill="none" stroke="#19233c" stroke-width="1.7"/></svg>
<span class="t" style="left:122.30px;top:67.10px;font-size:15px;color:#353d4c;letter-spacing:0.077px;">Repository</span>
<span class="t" style="left:200.60px;top:67.10px;font-size:15px;color:#353d4c;">/</span>
<span class="t" style="left:212.40px;top:67.10px;font-size:15px;color:#353d4c;letter-spacing:0.120px;">Top 20 Accounts by ARR - Blog</span>
<span class="t" style="left:1048.00px;top:67.10px;font-size:15px;color:#17191e;letter-spacing:-0.055px;-webkit-text-stroke:0.2px #17191e;">Report Type:</span>
<span class="t" style="left:1140.00px;top:67.10px;font-size:15px;color:#83878f;letter-spacing:0.034px;">Scorecard Mass Edit</span>
<svg style="left:1376px;top:74.5px;" width="12" height="7" viewBox="0 0 12 7"><path d="M0 0H11.4L5.7 6Z" fill="#9a9da3"/></svg>
<div class="a" style="left:1140px;top:93px;width:251px;height:1px;background:#e3e4e6"></div>
<svg style="left:1413.5px;top:68px;" width="17.6" height="17.6" viewBox="0 0 17.6 17.6"><path d="M2 .3H13.2L17.3 4.4V15.6Q17.3 17.3 15.6 17.3H2Q.3 17.3 .3 15.6V2Q.3 .3 2 .3Z" fill="#333f57"/><rect x="2.1" y="2.1" width="10.5" height="3.7" fill="#fff"/><circle cx="8.8" cy="12.3" r="3.7" fill="#fff"/></svg>
<svg style="left:1451.3px;top:68px;" width="17.6" height="17.6" viewBox="0 0 17.6 17.6"><path d="M2 .3H13.2L17.3 4.4V15.6Q17.3 17.3 15.6 17.3H2Q.3 17.3 .3 15.6V2Q.3 .3 2 .3Z" fill="#333f57"/><rect x="2.1" y="2.1" width="10.5" height="3.7" fill="#fff"/><circle cx="7.4" cy="12.3" r="3.7" fill="#fff"/><path d="M12.2 16.2L16.2 12.2" stroke="#fff" stroke-width="1.7"/><path d="M10.9 17.4L11.4 15.4L12.9 16.9Z" fill="#fff"/></svg>
<svg style="left:1488px;top:66px;" width="22" height="22" viewBox="0 0 22 22"><path d="M12.6 2.9H1.9V19.4" fill="none" stroke="#1d2740" stroke-width="1.5"/><path d="M1.2 19.4H18.4V9.4" fill="none" stroke="#5f6a7e" stroke-width="1.5"/><path d="M4.4 17V15.4M7.8 17V13.4M11.4 17V10.8M14.8 17V12.8" stroke="#1d2740" stroke-width="1.8"/><path d="M17 1.9V7.3M14.3 4.6H19.7" stroke="#1d2740" stroke-width="1.15"/></svg>
<svg style="left:1525px;top:67px;" width="20" height="20" viewBox="0 0 20 20"><path d="M4 7.4A7.1 7.1 0 1 1 4.3 13.6" fill="none" stroke="#1d2740" stroke-width="1.75"/><path d="M2.2 2.2L2.6 9.2L8.8 6.2Z" fill="#1d2740"/></svg>
<svg style="left:1559px;top:67px;" width="20" height="20" viewBox="0 0 20 20"><path d="M16 7.4A7.1 7.1 0 1 0 15.7 13.6" fill="none" stroke="#1d2740" stroke-width="1.75"/><path d="M17.8 2.2L17.4 9.2L11.2 6.2Z" fill="#1d2740"/></svg>
<div class="a" style="left:0px;top:2px;width:52px;height:888px;background:#fff;box-shadow:1px 0 4px rgba(0,0,0,.13)"></div>
<svg style="left:16px;top:20px;" width="22" height="20" viewBox="0 0 22 20"><path d="M1.2 4.3H16.2M1.2 10.3H19.3M1.2 16.2H14.6" stroke="#8b9098" stroke-width="1.3" fill="none"/></svg>
<div class="a" style="left:0px;top:57px;width:52px;height:1px;background:#d9dadc"></div>
<div class="a" style="left:0px;top:108px;width:52px;height:1px;background:#d9dadc"></div>
<svg style="left:15px;top:72px;" width="22" height="22" viewBox="0 0 22 22"><circle cx="9.8" cy="10.4" r="7.9" fill="none" stroke="#555b68" stroke-width="1.12"/><path d="M15.5 16L19.4 19.7" stroke="#555b68" stroke-width="1.12" stroke-linecap="round"/></svg>
<svg style="left:16px;top:125px;" width="24" height="22" viewBox="0 0 24 22"><path d="M1.3 9.8L11.9 2L22.5 9.8" fill="none" stroke="#555b68" stroke-width="1.12" stroke-linecap="round" stroke-linejoin="round"/><path d="M3.5 8.8V19.2Q3.5 20.4 4.7 20.4H19.1Q20.3 20.4 20.3 19.2V8.8" fill="none" stroke="#555b68" stroke-width="1.12"/><path d="M8.9 20.4V13.8H14.5V20.4" fill="none" stroke="#555b68" stroke-width="1.12"/></svg>
<span class="t" style="left:18.00px;top:179.30px;font-size:15.6px;color:#5a606c;letter-spacing:-2.400px;">AE</span>
<svg style="left:16.9px;top:234.2px;" width="22" height="19" viewBox="0 0 22 19"><use href="#tl" stroke="#555b68" stroke-width="1.05" transform="scale(1.04 1.0)"/><circle cx="2.3" cy="4.6" r="2.1" fill="#fff" stroke="#555b68" stroke-width="1"/><circle cx="2.3" cy="12" r="2.1" fill="#fff" stroke="#555b68" stroke-width="1"/></svg>
<svg style="left:16px;top:284px;" width="22" height="24" viewBox="0 0 22 24"><rect x="1.3" y="4.2" width="18.6" height="18" rx="1.2" fill="none" stroke="#555b68" stroke-width="1.12"/><path d="M5.6 1.2V4.2M15.6 1.2V4.2" stroke="#555b68" stroke-width="1.12"/><circle cx="10.6" cy="12.6" r="6.2" fill="none" stroke="#555b68" stroke-width="1.12"/><path d="M10.6 8.8V12.8L13.4 14.2" fill="none" stroke="#555b68" stroke-width="1.12"/></svg>
<svg style="left:16px;top:337px;" width="22" height="24" viewBox="0 0 22 24"><path d="M6.6 4.6H2.4Q1.4 4.6 1.4 5.6V20.8Q1.4 21.8 2.4 21.8H19.6Q20.6 21.8 20.6 20.8V5.6Q20.6 4.6 19.6 4.6H15.4" fill="none" stroke="#555b68" stroke-width="1.12"/><rect x="6.6" y="1.6" width="8.8" height="4.8" rx="2.4" fill="none" stroke="#555b68" stroke-width="1.12"/><path d="M4.8 13.2L9.2 16.6L16.8 10.2" fill="none" stroke="#555b68" stroke-width="1.12"/></svg>
<svg style="left:16px;top:393px;" width="24" height="22" viewBox="0 0 24 22"><circle cx="4.3" cy="10.9" r="3" fill="none" stroke="#555b68" stroke-width="1.12"/><rect x="12.8" y="1.2" width="9.8" height="6.2" rx="1.6" fill="none" stroke="#555b68" stroke-width="1.12"/><rect x="12.8" y="14.6" width="9.8" height="6.2" rx="1.6" fill="none" stroke="#555b68" stroke-width="1.12"/><path d="M7.3 10.9H9.8M12.8 4.3H11.3Q9.8 4.3 9.8 5.8V16.2Q9.8 17.7 11.3 17.7H12.8" fill="none" stroke="#555b68" stroke-width="1.12"/></svg>
<div class="a" style="left:0px;top:429.5px;width:52px;height:53px;background:#f0f1f3"></div>
<div class="a" style="left:0px;top:429.5px;width:2px;height:53px;background:#2b7bab"></div>
<svg style="left:16.6px;top:444.7px;" width="22.6" height="22.6" viewBox="0 0 24 24"><path d="M19.14 12.94c.04-.3.06-.61.06-.94 0-.32-.02-.64-.07-.94l2.03-1.58c.18-.14.23-.41.12-.61l-1.92-3.32c-.12-.22-.37-.29-.59-.22l-2.39.96c-.5-.38-1.03-.7-1.62-.94l-.36-2.54c-.04-.24-.24-.41-.48-.41h-3.84c-.24 0-.43.17-.47.41l-.36 2.54c-.59.24-1.13.57-1.62.94l-2.39-.96c-.22-.08-.47 0-.59.22L2.74 8.87c-.12.21-.08.47.12.61l2.03 1.58c-.05.3-.09.63-.09.94s.02.64.07.94l-2.03 1.58c-.18.14-.23.41-.12.61l1.92 3.32c.12.22.37.29.59.22l2.39-.96c.5.38 1.03.7 1.62.94l.36 2.54c.05.24.24.41.48.41h3.84c.24 0 .44-.17.47-.41l.36-2.54c.59-.24 1.13-.56 1.62-.94l2.39.96c.22.08.47 0 .59-.22l1.92-3.32c.12-.22.07-.47-.12-.61l-2.01-1.58zM12 15.6c-1.98 0-3.6-1.62-3.6-3.6s1.62-3.6 3.6-3.6 3.6 1.62 3.6 3.6-1.62 3.6-3.6 3.6z" fill="none" stroke="#2b7bab" stroke-width="1.12"/></svg>
<svg style="left:16.6px;top:444.7px;" width="22.6" height="22.6" viewBox="0 0 24 24"><circle cx="12" cy="12" r="5" fill="#f0f1f3" stroke="none"/><circle cx="12" cy="12" r="4.2" fill="none" stroke="#2b7bab" stroke-width="1.12"/></svg>
<div class="a" style="left:1598px;top:55px;width:2px;height:835px;background:linear-gradient(90deg,#e6e7e8,#bfc0c2)"></div>
<div class="a" style="left:1598px;top:2px;width:2px;height:53px;background:linear-gradient(90deg,#2c4062,#55647f)"></div>
<svg style="left:0px;top:883px;" width="7" height="7" viewBox="0 0 7 7"><path d="M0 0V7H7A7 7 0 0 1 0 0Z" fill="#000"/></svg>
<svg style="left:1593px;top:883px;" width="7" height="7" viewBox="0 0 7 7"><path d="M7 0V7H0A7 7 0 0 0 7 0Z" fill="#000"/></svg>
</body></html>
